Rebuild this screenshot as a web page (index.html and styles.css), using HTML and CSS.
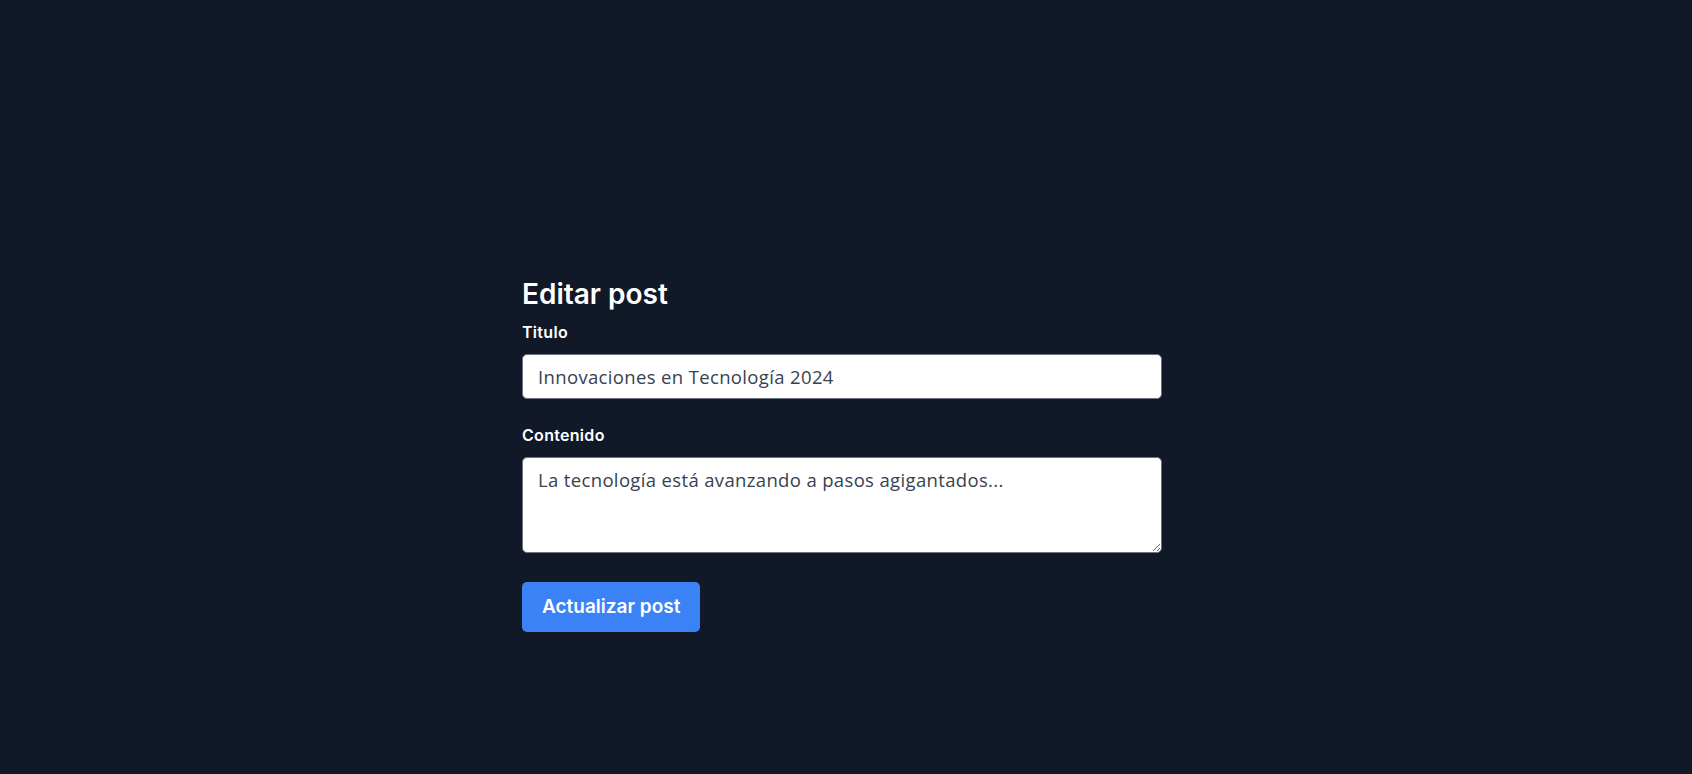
FILE: index.html
```html
<!DOCTYPE html>
<html lang="es">
<head>
<meta charset="utf-8">
<title>Editar post</title>
<link rel="stylesheet" href="styles.css">
</head>
<body>
<main class="page">
  <form class="editor">
    <h1 class="editor-title">Editar post</h1>
    <div class="field">
      <label class="field-label" for="titulo">Titulo</label>
      <input class="field-input" id="titulo" type="text" value="Innovaciones en Tecnología 2024">
    </div>
    <div class="field">
      <label class="field-label" for="contenido">Contenido</label>
      <textarea class="field-input field-textarea" id="contenido">La tecnología está avanzando a pasos agigantados...</textarea>
    </div>
    <button class="submit" type="button">Actualizar post</button>
  </form>
</main>
</body>
</html>
```
FILE: styles.css
```css
* { box-sizing: border-box; }
html, body { margin: 0; padding: 0; }
body {
  background: #111827;
  font-family: "Inter", "Open Sans", sans-serif;
  color: #ffffff;
  min-height: 100vh;
}
.page {
  display: flex;
  justify-content: center;
  padding: 276px 8px 0 0;
}
.editor {
  width: 640px;
  display: flex;
  flex-direction: column;
}
.editor-title {
  margin: 0 0 10px;
  font-size: 28px;
  line-height: 36px;
  font-weight: 600;
}
.field {
  display: flex;
  flex-direction: column;
  margin-bottom: 26px;
}
.field-label {
  font-size: 16px;
  line-height: 20px;
  font-weight: 600;
  letter-spacing: 0.3px;
  margin-bottom: 12px;
}
.field-input {
  font-family: "Open Sans", "Inter", sans-serif;
  font-size: 18.5px;
  line-height: 27px;
  letter-spacing: 0.35px;
  color: #374151;
  background: #ffffff;
  border: 1px solid #6b7280;
  border-radius: 5px;
  padding: 8px 15px;
  height: 45px;
  width: 100%;
  outline: none;
}
.field-textarea {
  height: 96px;
  resize: vertical;
}
.submit {
  align-self: flex-start;
  margin-top: 3px;
  font-family: inherit;
  font-size: 19px;
  line-height: 26px;
  font-weight: 600;
  color: #ffffff;
  background: #3b82f6;
  border: none;
  border-radius: 5px;
  padding: 12px 20px;
  height: 50px;
  cursor: pointer;
}
```
